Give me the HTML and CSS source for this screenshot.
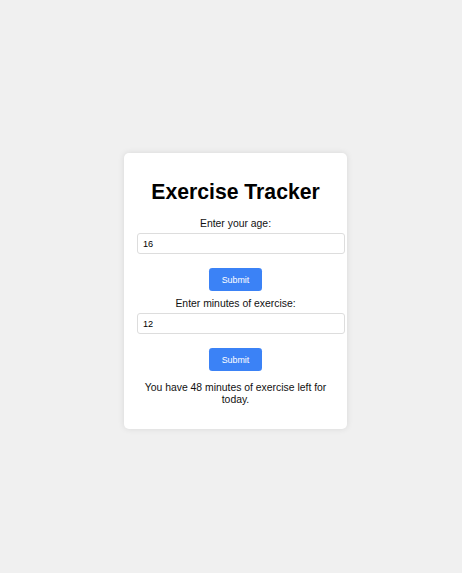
FILE: index.html
```html
<!DOCTYPE html>
<html lang="en">
<head>
<meta charset="utf-8">
<title>Exercise Tracker</title>
<link rel="stylesheet" href="styles.css">
</head>
<body>
  <main class="tracker">
    <h1 class="tracker-title">Exercise Tracker</h1>

    <label class="field-label" for="age">Enter your age:</label>
    <input class="field-input" id="age" type="text" value="16">
    <button class="submit-btn" type="button">Submit</button>

    <label class="field-label" for="minutes">Enter minutes of exercise:</label>
    <input class="field-input" id="minutes" type="text" value="12">
    <button class="submit-btn" type="button">Submit</button>

    <p class="result">You have 48 minutes of exercise left for today.</p>
  </main>
</body>
</html>
```

FILE: styles.css
```css
html, body {
  margin: 0;
  padding: 0;
}

body {
  background: #f0f0f0;
  font-family: "Liberation Sans", Arial, Helvetica, sans-serif;
  font-size: 10.4px;
  color: #111;
  display: flex;
  justify-content: center;
  align-items: flex-start;
  min-height: 573px;
  padding: 153px 0 0 9px;
  box-sizing: border-box;
}

.tracker {
  width: 197px;
  padding: 13px;
  background: #ffffff;
  border-radius: 5px;
  box-shadow: 0 0 6px rgba(0, 0, 0, 0.1);
  text-align: center;
}

.tracker-title {
  margin: 13.9px 0;
  font-size: 21.2px;
  font-weight: bold;
  color: #000;
}

.field-label {
  display: block;
  margin-bottom: 4px;
}

.field-input {
  display: block;
  width: calc(100% + 11px);
  height: 21.5px;
  margin: 0 0 14px;
  padding: 0 5px;
  box-sizing: border-box;
  border: 1px solid #dddddd;
  border-radius: 3px;
  font-family: "Liberation Sans", Arial, Helvetica, sans-serif;
  font-size: 9.2px;
  color: #000;
  text-align: left;
  background: #fff;
  outline: none;
}

.submit-btn {
  display: block;
  width: 53px;
  height: 23px;
  margin: 0 auto 6.5px;
  padding: 0;
  border: none;
  border-radius: 3.25px;
  background: #3b82f6;
  color: #ffffff;
  font-family: "Liberation Sans", Arial, Helvetica, sans-serif;
  font-size: 8.9px;
  cursor: pointer;
}

.result {
  margin: 10.4px 0;
  line-height: 12px;
}
```
